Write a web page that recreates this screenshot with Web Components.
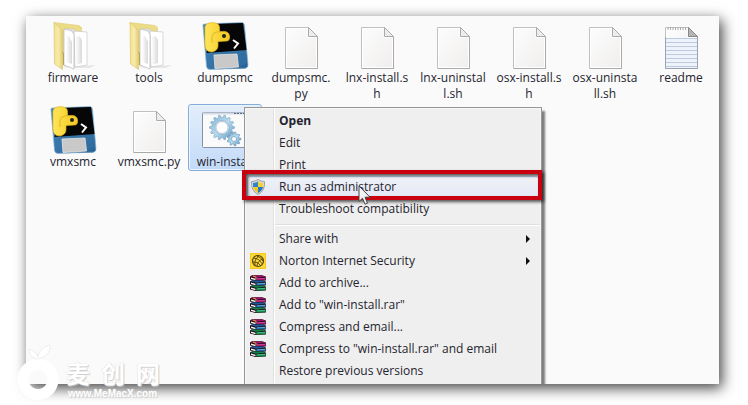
<!DOCTYPE html>
<html lang="en">
<head>
<meta charset="utf-8">
<title>File explorer</title>
<style>
  html, body { height: 100%; margin: 0; }
  body { background: #fff; color: #24242e; font: 12px/16px "Open Sans", "Noto Sans", sans-serif; overflow: hidden; }
</style>
</head>
<body>
<explorer-page>
  <explorer-window>
    <file-item kind="folder">firmware</file-item>
    <file-item kind="folder">tools</file-item>
    <file-item kind="python">dumpsmc</file-item>
    <file-item kind="doc">dumpsmc.<br>py</file-item>
    <file-item kind="doc">lnx-install.s<br>h</file-item>
    <file-item kind="doc">lnx-uninstal<br>l.sh</file-item>
    <file-item kind="doc">osx-install.s<br>h</file-item>
    <file-item kind="doc">osx-uninsta<br>ll.sh</file-item>
    <file-item kind="text">readme</file-item>
    <file-item kind="python">vmxsmc</file-item>
    <file-item kind="doc">vmxsmc.py</file-item>
    <file-item kind="batch" selected>win-install</file-item>
    <context-menu slot="menu">
      <menu-entry primary>Open</menu-entry>
      <menu-entry>Edit</menu-entry>
      <menu-entry>Print</menu-entry>
      <menu-entry icon="shield" active>Run as administrator</menu-entry>
      <menu-entry>Troubleshoot compatibility</menu-entry>
      <menu-divider></menu-divider>
      <menu-entry submenu>Share with</menu-entry>
      <menu-entry icon="norton" submenu>Norton Internet Security</menu-entry>
      <menu-entry icon="rar">Add to archive...</menu-entry>
      <menu-entry icon="rar">Add to "win-install.rar"</menu-entry>
      <menu-entry icon="rar">Compress and email...</menu-entry>
      <menu-entry icon="rar">Compress to "win-install.rar" and email</menu-entry>
      <menu-entry>Restore previous versions</menu-entry>
    </context-menu>
  </explorer-window>
  <site-mark slot="mark"></site-mark>
</explorer-page>

<script>
const page = `<path d="M8.500 5.500h23l9 9v32h-32z" fill="url(#p)" stroke="#c0c0c0"/><path d="M9.500 6.500h21.500v9h8.500v30h-30z" fill="none" stroke="#fff"/><path d="M9 46.500h31.500V15" fill="none" stroke="#aaa"/><path d="M31.500 5.500v9h9z" fill="#ededed" stroke="#aaa"/>`;
const paper = `<linearGradient id="p" x2="1" y2="1"><stop stop-color="#fdfdfd"/><stop offset="1" stop-color="#f0eeed"/></linearGradient>`;

const gear = (cx, cy, r, n, t) => {
  let pts = [];
  for (let i = 0; i < n * 4; i++) {
    const a = (i - .5) * Math.PI / (n * 2), q = (i % 4 < 2) ? r : r - t;
    pts.push((cx + q * Math.cos(a)).toFixed(1) + ',' + (cy + q * Math.sin(a)).toFixed(1));
  }
  return pts.join(' ');
};

const fileIcons = {
  folder: `<defs><linearGradient id="y"><stop stop-color="#f3e08e"/><stop offset=".5" stop-color="#f8ecab"/><stop offset="1" stop-color="#e2cd74"/></linearGradient><linearGradient id="w"><stop stop-color="#fff"/><stop offset="1" stop-color="#d9d9d9"/></linearGradient></defs>
    <path d="M30 44l17-1-6 3H13z" fill="#777" opacity=".15"/>
    <path d="M5 .5l25 3 2.500 2V40H12z" fill="#ecdc86" stroke="#dfcb78" stroke-width=".6"/>
    <path d="M15 7h10l3 3v34H15z" fill="url(#w)" stroke="#c5c5c5" stroke-width=".6"/>
    <path d="M25 9l13 1v33l-12 2z" fill="#fff" stroke="#c9c9c9" stroke-width=".7"/>
    <path d="M26.500 15l4-1 2.500 4v23l-6.500 2z" fill="url(#w)"/>
    <path d="M15 7l8 2 2 3.500V47L15 43z" fill="#fff" stroke="#b9b9b9" stroke-width=".7"/>
    <path d="M17 14l3 0 3 6v22l-6-2z" fill="url(#w)"/>
    <path d="M5 .5l8.500 8v39L5.500 42z" fill="url(#y)" stroke="#dcc875" stroke-width=".7"/>
    <path d="M13 30l1.500 1v12" fill="none" stroke="#b5a35c"/>`,
  python: `<defs><linearGradient id="b" x2="1" y2="1"><stop stop-color="#3f81b5"/><stop offset="1" stop-color="#2f6a9d"/></linearGradient><linearGradient id="g"><stop stop-color="#ffe45a"/><stop offset="1" stop-color="#f2c81e"/></linearGradient></defs>
    <path d="M2 4q-1-2 2-2l37-1.500q2 0 2.500 3l3.500 39q0 3-2 3.500L9 47.500q-3 0-3.500-3z" fill="url(#b)" stroke="#8db4d1" stroke-width=".7"/>
    <path d="M14 47q20 1 31-5l2 2-3 3z" fill="#1d5788" opacity=".4"/>
    <path d="M12 2l30-1 3.500 27L5.500 31z" fill="#060606"/>
    <path d="M13 33l23-1 1.500 13L14 46.500z" fill="#c9c9c9" stroke="#e4e4e4" stroke-width=".8"/>
    <path d="M4 8Q3 1 10 .8q9-1 8.500 6v3Q28 8 28.500 14q.5 5-3 5l-8.500.5v4q0 5-6 6.500Q4 30 4 23z" fill="url(#g)" stroke="#e4b719" stroke-width=".7"/>
    <path d="M11 21v-7q0-3 5-4l4-.5" fill="none" stroke="#d7ae17" stroke-width=".8"/>
    <circle cx="23" cy="14" r="2" fill="#222"/>
    <path d="M32 18l5 3.500-4 5" fill="none" stroke="#fff" stroke-width="2"/>`,
  doc: `<defs>${paper}</defs>${page}`,
  text: `<defs>${paper}</defs>${page}<path d="M9 16h31v30H9z" fill="#edf2fb"/>
    <path d="M9 16.500h31m-31 4h31m-31 4h31m-31 4h31m-31 4h31m-31 4h31m-31 4h31m-31 4h31" stroke="#bccae2"/>
    <path d="M11 5v3m2.500 0V5M16 5v3m2.500 0V5M21 5v3m2.500 0V5M26 5v3m2.500 0V5" stroke="#aaa"/><path d="M31.500 5.500v9h9z" fill="#b5b5b5" stroke="#888"/><path d="M8.500 15v31.500h32V15" fill="none" stroke="#9aa3b2"/>`,
  batch: `<defs><linearGradient id="m" x2="1" y2="1"><stop stop-color="#7faed3"/><stop offset=".5" stop-color="#b5def1"/><stop offset="1" stop-color="#5c94c4"/></linearGradient></defs>
    <rect x="1.500" y="6.500" width="45" height="35" rx="1" fill="#fafafa" stroke="#8492a5"/>
    <path d="M2 7.500h44" stroke="#d3dbe6" stroke-width="2"/><path d="M33 7.500h11" stroke="#566b86" stroke-dasharray="2 1"/>
    <path fill-rule="evenodd" d="M${gear(21, 21.500, 12.500, 14, 2.500)}zM21 14.500a7 7 0 1 0 .1 0z" fill="url(#m)" stroke="#7d9fbd" stroke-width=".6"/>
    <circle cx="21" cy="21.500" r="6" fill="#fff" stroke="#b3c5d5"/>
    <path fill-rule="evenodd" d="M${gear(33, 33, 7, 9, 2)}zM33 30.500a2.500 2.500 0 1 0 .1 0z" fill="url(#m)" stroke="#5c86ad" stroke-width=".6"/>`
};

const menuIcons = {
  shield: `<path d="M8 .5q3 2 6.500 2 1 9-6.500 13Q.5 11.500 1.500 2.500 5 2.500 8 .5z" fill="#d8d8d0" stroke="#8e9297" stroke-width=".8"/>
    <path d="M8 2.500V8H3V4q3 0 5-1.500z" fill="#2d83cf"/><path d="M8 2.500V8h5V4q-3 0-5-1.500z" fill="#f6d430"/>
    <path d="M8 8v6Q3.500 11.500 3 8z" fill="#f3c720"/><path d="M8 8v6q4.500-2.500 5-6z" fill="#2378c4"/>`,
  norton: `<rect width="16" height="16" fill="#fbc91d"/><rect x="1" y="1" width="14" height="14" fill="#fdd935"/>
    <g fill="none" stroke="#54430c" stroke-width=".9"><circle cx="8" cy="8" r="5.500" stroke-width="1.200"/><path d="M4 5q5 0 8.500 6M3 9q5-1 8 4M7 3q4 1 6 5M9 3q-5 3-4 9M13 6q-6 2-6 7"/></g>`,
  rar: [['#9c1266', '#d34a9c', 0], ['#1c5c96', '#6cb0de', 5], ['#12824a', '#4fc885', 10]].map(([c, l, y]) =>
    `<g transform="translate(0 ${y})"><path d="M0 1.500L2 .2h10l3.800 1.300V5.500L5.500 6 0 4.500z" fill="#1c0a18"/><path d="M.8 1.300L2.300.5H12l3.500 1.300L6 2.800z" fill="${c}"/><path d="M6 3.400l9.500-.8v2.600L6 5.500z" fill="${c}"/><path d="M7 3.900l8-.5" stroke="${l}" stroke-width=".9"/><path d="M1 2.500l4.500 1.300V5.200L1 3.900z" fill="#f4f4f4"/></g>`).join('') + `<path d="M3 1l3 1.200v2" fill="none" stroke="#e7a52a"/>`
};

const define = (name, render) => customElements.define(name, class extends HTMLElement {
  constructor() { super(); this.attachShadow({ mode: 'open' }); }
  connectedCallback() { this.shadowRoot.innerHTML = render(this); }
});

define('explorer-page', () => `<style>
  :host { display: flex; box-sizing: border-box; height: 100vh; padding: 16px 29px 21px 26px; position: relative; }
  main { flex: 1; display: flex; min-width: 0; }
  ::slotted(site-mark) { position: absolute; left: 17px; bottom: 4px; }
</style><main><slot></slot></main><slot name="mark"></slot>`);

define('explorer-window', () => `<style>
  :host { flex: 1; position: relative; background: #fafafa; box-shadow: 3px 4px 13px rgba(0,0,0,.75); }
  .view { position: relative; box-sizing: border-box; height: 100%; overflow: hidden; padding: 4px 0 0 9px; }
  .files { display: grid; grid-template-columns: repeat(auto-fill, minmax(76px, 1fr)); grid-auto-rows: 82px; row-gap: 2px; align-items: start; }
  ::slotted(context-menu) { position: absolute; left: 218px; top: 91px; bottom: -2px; }
</style><div class="view"><div class="files"><slot></slot></div><slot name="menu"></slot></div>`);

define('file-item', el => `<style>
  :host { display: block; padding: 0 1px; }
  button { display: flex; flex-direction: column; align-items: center; box-sizing: border-box; width: 100%; margin: 0; padding: 1px 0 0; border: 1px solid transparent; border-radius: 3px; background: none; color: inherit; font: inherit; white-space: nowrap; text-align: center; }
  :host([selected]) button { border-color: #84acdd; background: linear-gradient(#e3eefc, #c3daf8); box-shadow: inset 0 0 0 1px #ebf3fd; }
  svg { display: block; width: 48px; height: 48px; }
</style><button type="button"><svg viewBox="0 0 48 48" aria-hidden="true">${fileIcons[el.getAttribute('kind')]}</svg><span><slot></slot></span></button>`);

define('context-menu', () => `<style>
  :host { display: block; box-sizing: border-box; width: 298px; padding: 2px; border: 1px solid #979797; background: linear-gradient(90deg, transparent 28px, #e0e0e0 28px, #e0e0e0 29px, #fff 29px, #fff 30px, transparent 30px) #efefef; box-shadow: 3px 4px 2px rgba(0,0,0,.5), inset 0 0 0 1px #f6f6f6; }
  .pointer { position: absolute; left: 113px; top: 77px; width: 13px; height: 21px; z-index: 2; }
</style><div role="menu"><slot></slot></div>
<svg class="pointer" viewBox="0 0 13 21" aria-hidden="true"><path d="M1 1v15.500l3.500-3.300 2.500 6 2.500-1-2.500-6h5z" fill="#f4f4f4" stroke="#444"/></svg>`);

define('menu-entry', el => `<style>
  :host { display: block; position: relative; }
  button { display: flex; align-items: center; gap: 13px; box-sizing: border-box; width: 100%; height: 22px; margin: 0; padding: 0 8px 0 2px; border: 1px solid transparent; border-radius: 3px; background: none; color: inherit; font: inherit; text-align: left; white-space: nowrap; }
  .label { flex: 1; }
  .icon { flex: none; width: 16px; height: 16px; }
  .arrow { width: 4px; height: 8px; }
  :host([primary]) button { font-weight: 700; }
  :host([active]) button { border-color: #b9d0ec; background: linear-gradient(#f0f1f7, #e4e7f5); }
  :host([active])::after { content: ""; position: absolute; inset: -6px -3px -2px -5px; border: 4px solid #c9000f; box-shadow: 2px 2px 3px rgba(0,0,0,.65), inset 2px 2px 3px rgba(0,0,0,.65); z-index: 1; pointer-events: none; }
</style><button type="button" role="menuitem"><svg class="icon" viewBox="0 0 16 16" aria-hidden="true">${menuIcons[el.getAttribute('icon')] || ''}</svg><span class="label"><slot></slot></span>${el.hasAttribute('submenu') ? '<svg class="arrow" viewBox="0 0 4 8" aria-hidden="true"><path d="M0 0l4 4-4 4z" fill="#111"/></svg>' : ''}</button>`);

define('menu-divider', () => `<style>
  :host { display: block; padding: 4px 0 2px 28px; }
  hr { margin: 0; border: 0; height: 1px; background: #dedede; border-bottom: 1px solid #fff; }
</style><hr>`);

define('site-mark', () => `<style>
  :host { display: flex; align-items: flex-end; gap: 7px; color: #fff; text-shadow: 0 0 1px #ccc, 1px 1px 1px #ccc; }
  svg { width: 42px; height: 56px; }
  .name { display: flex; justify-content: space-between; width: 94px; font: 700 24px/27px "Noto Sans CJK SC", sans-serif; }
  .site { padding-left: 2px; font: 700 10px/15px "Liberation Sans", sans-serif; }
</style><svg viewBox="0 0 42 56" aria-hidden="true"><g fill="#fff"><path fill-rule="evenodd" d="M21 14a20.500 20.500 0 1 0 .1 0zM21 25a9.500 9.500 0 1 1-.1 0z"/><path d="M20 14Q12 12 12 4q7 2 9 8Q22 3 33 0q1 11-12 14z" stroke="#e3e3e3" stroke-width=".6"/></g></svg>
<div><div class="name" lang="zh"><span>麦</span><span>创</span><span>网</span></div><div class="site">www.MeMacX.com</div></div>`);
</script>
</body>
</html>
